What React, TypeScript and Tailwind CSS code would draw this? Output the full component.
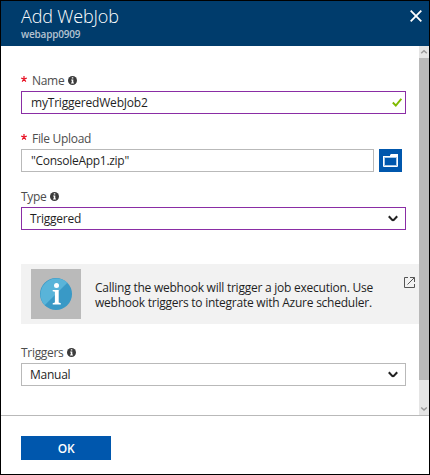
import type { ReactNode } from "react";

function InfoDot() {
  return (
    <svg width="9" height="9" viewBox="0 0 9 9" className="shrink-0">
      <circle cx="4.5" cy="4.5" r="4.5" fill="#3b3b3b" />
      <path d="M3.8 1.2h1.5v1.3H3.8zM3.2 3.6h2.1v3h.6v.9H3.1v-.9h.7V4.5h-.6z" fill="#fff" />
    </svg>
  );
}

function Label({ required, info, children }: { required?: boolean; info?: boolean; children: ReactNode }) {
  return (
    <div className="flex h-[17px] items-center pt-0.5 text-[12px] leading-[17px] tracking-[-0.3px] text-[#4d4d4d]">
      {required && (
        <svg width="6" height="6" viewBox="0 0 6 6" className="mr-[5px] mb-[4px] shrink-0">
          <path d="M3 0v3M.2 2.2L3 3l2.8-.8M1.2 5.6L3 3l1.8 2.6" fill="none" stroke="#e81123" strokeWidth="1.2" />
        </svg>
      )}
      <span className="mr-[3.5px] whitespace-nowrap">{children}</span>
      {info && <InfoDot />}
    </div>
  );
}

function Select({ active, children }: { active?: boolean; children: ReactNode }) {
  return (
    <div
      className={`flex h-[23px] w-[385px] items-center justify-between border pr-[7px] pl-2 text-[12px] tracking-[-0.25px] text-[#1f1f1f] ${
        active ? "border-[#8a2da5]" : "border-[#b9b9b9]"
      }`}
    >
      <span>{children}</span>
      <svg width="10" height="7" viewBox="0 0 10 7">
        <path d="M.8 1.2L3.9 4.6Q5 5.5 6.1 4.6L9.2 1.2" fill="none" stroke="#222" strokeWidth="2.1" />
      </svg>
    </div>
  );
}

export default function App() {
  return (
    <div className="flex h-[475px] w-[430px] flex-col overflow-hidden border border-black bg-white font-['Open_Sans','Noto_Sans',sans-serif]">
      <header className="flex h-[45px] shrink-0 justify-between bg-[#003c6c] pr-[7px] pl-5">
        <div>
          <h1 className="mt-[3px] h-[24px] text-[18px] leading-[25px] font-light tracking-[-0.15px] text-white">Add WebJob</h1>
          <p className="text-[10px] leading-[12px] font-semibold tracking-[-0.2px] text-[#b4c3d1]">webapp0909</p>
        </div>
        <svg width="12" height="12" viewBox="0 0 12 12" className="mt-[9px]">
          <path d="M.7.7l10.6 10.6M11.3.7L.7 11.3" stroke="#fff" strokeWidth="1.8" />
        </svg>
      </header>

      <div className="flex h-[369px] shrink-0">
        <main className="flex w-[418px] flex-col pl-5">
          <div className="mt-[25px]">
            <Label required info>Name</Label>
          </div>
          <div className="mt-[3px] flex h-[23px] w-[385px] items-center justify-between border border-[#8a2da5] pr-[3px] pl-[9px] text-[12px] tracking-[-0.2px] text-[#1f1f1f]">
            <span>myTriggeredWebJob2</span>
            <svg width="10" height="9" viewBox="0 0 10 9">
              <path d="M.8 4.5l3 3L9.3.8" fill="none" stroke="#7fba00" strokeWidth="1.9" />
            </svg>
          </div>

          <div className="mt-[15px]">
            <Label required>File Upload</Label>
          </div>
          <div className="mt-[3px] flex gap-[5px]">
            <div className="flex h-[23px] w-[353px] items-center border border-[#b9b9b9] pl-[9px] text-[12px] tracking-[-0.28px] text-[#1f1f1f]">
              "ConsoleApp1.zip"
            </div>
            <div className="flex size-[23px] items-center justify-center bg-[#0057ad]">
              <svg width="15" height="13" viewBox="0 0 15 13">
                <path d="M0 2h7V1l1-1h7v12a1 1 0 0 1-1 1H1a1 1 0 0 1-1-1z" fill="#fff" />
                <path d="M1 3h13v9H1z" fill="#a9c9e8" />
                <path d="M2 4h11v7H2z" fill="#0057ad" />
              </svg>
            </div>
          </div>

          <div className="mt-[15px]">
            <Label info>Type</Label>
          </div>
          <div className="mt-[3px]">
            <Select active>Triggered</Select>
          </div>

          <div className="mt-[34px] flex h-[60px] w-[398px] bg-[#f2f2f2]">
            <div className="mt-[5px] ml-[10px] flex size-[50px] items-center justify-center bg-[#bababa]">
              <svg width="32" height="32" viewBox="0 0 32 32">
                <circle cx="16" cy="16" r="16" fill="#3999c6" />
                <path d="M27.3 4.7A16 16 0 0 0 4.7 27.3z" fill="#59b4d9" />
                <circle cx="16.5" cy="7.6" r="2.5" fill="#fff" />
                <path d="M12.7 12h6v12.6l2.1.6v1.3h-8.1v-1.3l2.2-.6V13.8l-2.2-.5z" fill="#fff" />
              </svg>
            </div>
            <div className="mt-4 ml-[14px] w-[300px] text-[12px] leading-[15px] tracking-[-0.24px] whitespace-nowrap text-[#1f1f1f]">
              Calling the webhook will trigger a job execution. Use
              <br />
              webhook triggers to integrate with Azure scheduler.
            </div>
            <svg width="11" height="11" viewBox="0 0 11 11" className="mt-[13px] ml-[9px] shrink-0">
              <path d="M4 .5H.5v10h10V7M6 .5h4.5V5M10.5.5L3.5 7.5" fill="none" stroke="#555" />
            </svg>
          </div>

          <div className="mt-[19px]">
            <Label info>Triggers</Label>
          </div>
          <div className="mt-[3px]">
            <Select>Manual</Select>
          </div>
        </main>

        <div className="flex w-[10px] flex-col items-center bg-[#e5e5e5]">
          <svg width="8" height="12" viewBox="0 0 8 12" className="shrink-0">
            <path d="M1.2 7.3L4 4.8l2.8 2.5" fill="none" stroke="#999" strokeWidth="1.5" />
          </svg>
          <div className="h-[322px] w-full shrink-0 bg-[#b9b9b9]" />
          <svg width="8" height="12" viewBox="0 0 8 12" className="mt-[22px] shrink-0">
            <path d="M1.2 5.5L4 8l2.8-2.5" fill="none" stroke="#999" strokeWidth="1.5" />
          </svg>
        </div>
      </div>

      <footer className="grow border-t border-[#b9b9b9] pt-5 pl-5">
        <button className="flex h-6 w-[90px] items-center justify-center bg-[#0057ad] pt-px text-[12px] font-semibold tracking-[-0.3px] text-white">OK</button>
      </footer>
    </div>
  );
}
